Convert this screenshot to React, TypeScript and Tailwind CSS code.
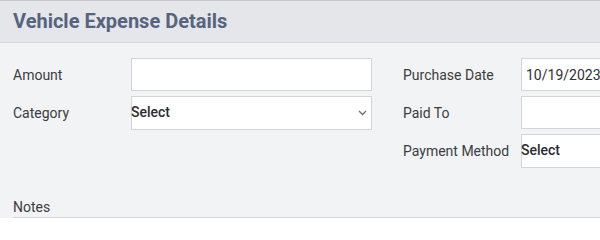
const ROBOTO = "font-['Roboto',_'Liberation_Sans',_sans-serif]";

function Field({ label, children }: { label: string; children: React.ReactNode }) {
  return (
    <div className="flex items-center h-[33px]">
      <label className="w-[118px] shrink-0 text-[14px] text-[#3b3d40] pt-[2px]">{label}</label>
      {children}
    </div>
  );
}

function TextBox({ value, width }: { value?: string; width: string }) {
  return (
    <div
      className={`${width} h-[33px] shrink-0 bg-white border border-[#d3d5d8] flex items-center px-[4px] pt-[1px] text-[14px] text-[#2e3033]`}
    >
      {value}
    </div>
  );
}

function SelectBox({ width, chevron }: { width: string; chevron?: boolean }) {
  return (
    <div
      className={`${width} h-[34px] shrink-0 bg-white border border-[#d3d5d8] flex items-center justify-between text-[14px] font-medium text-[#2a2c2f]`}
    >
      <span className="-ml-px">Select</span>
      {chevron && (
        <svg width="9" height="6" viewBox="0 0 9 6" className="mr-[4px]">
          <path d="M1 1l3.5 3.5L8 1" fill="none" stroke="#6b6e72" strokeWidth="1.3" />
        </svg>
      )}
    </div>
  );
}

export default function App() {
  return (
    <div className={`w-[600px] h-[218px] overflow-hidden bg-[#f1f3f5] ${ROBOTO}`}>
      <div className="h-[43px] border-t border-b border-t-[#c4c7cc] border-b-[#d2d5d9] bg-[#e4e6ea] flex items-center px-[13px]">
        <h1 className="text-[20px] font-bold text-[#57647f] -mt-[2px]">Vehicle Expense Details</h1>
      </div>

      <div className="pl-[13px] pt-[15px]">
        <div className="flex gap-[31px]">
          <div className="flex flex-col gap-[5px] w-[359px] shrink-0">
            <Field label="Amount">
              <TextBox width="w-[241px]" />
            </Field>
            <Field label="Category">
              <SelectBox width="w-[241px]" chevron />
            </Field>
          </div>
          <div className="flex flex-col gap-[5px] w-[240px] shrink-0">
            <Field label="Purchase Date">
              <TextBox width="w-[120px]" value="10/19/2023" />
            </Field>
            <Field label="Paid To">
              <TextBox width="w-[120px]" />
            </Field>
            <Field label="Payment Method">
              <SelectBox width="w-[120px]" />
            </Field>
          </div>
        </div>

        <div className="mt-[31px] text-[14px] leading-[18px] text-[#3b3d40]">Notes</div>
        <div className="mt-[1px] w-[640px] h-[40px] bg-white border border-[#d3d5d8]" />
      </div>
    </div>
  );
}
